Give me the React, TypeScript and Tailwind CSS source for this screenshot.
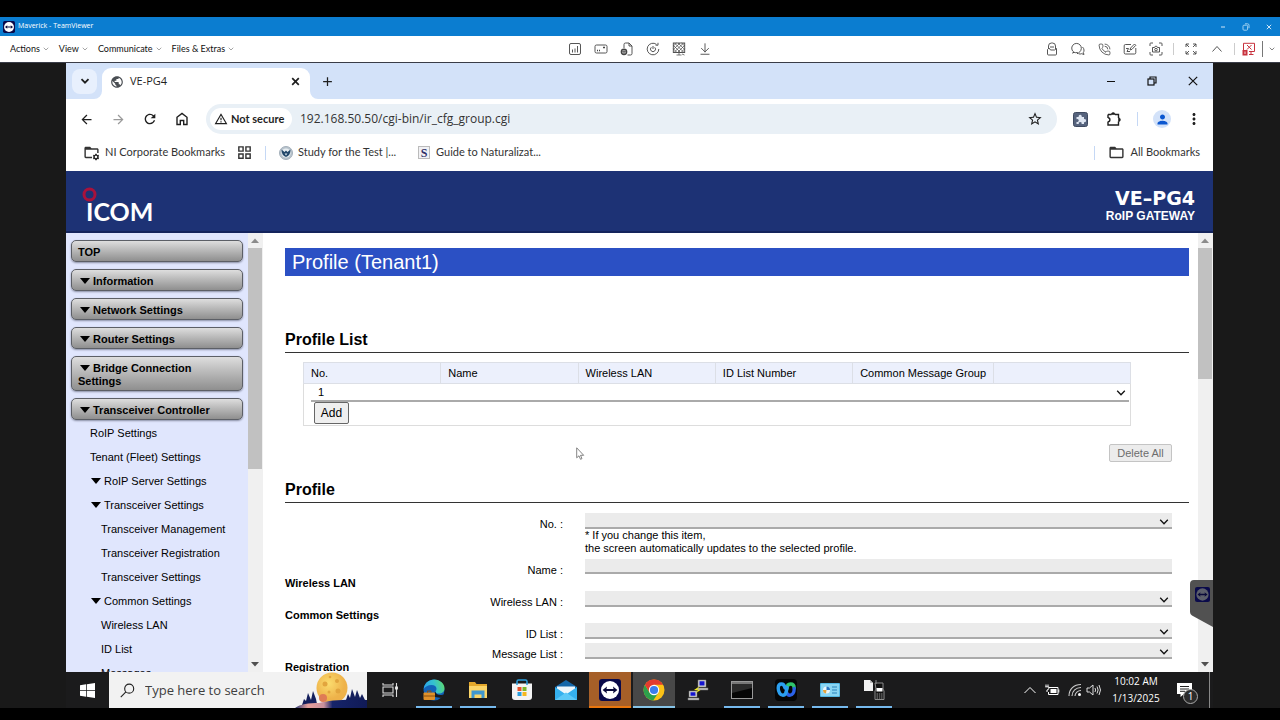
import { useState } from "react";
import type { ReactNode } from "react";
import {
  MdAdd, MdArrowBack, MdArrowForward, MdFolderOpen, MdGridView,
  MdMoreVert, MdOutlineWarningAmber, MdPerson, MdPublic,
  MdRefresh, MdStarBorder, MdSettings,
} from "react-icons/md";
import { ArrowDownToLine, ChevronDown, PhoneCall } from "lucide-react";

interface NavItem {
  label: string;
  level: 1 | 2 | 3;
  group?: boolean;
}

const MENUS = ["Actions", "View", "Communicate", "Files & Extras"];

const SECTIONS = [
  "Information",
  "Network Settings",
  "Router Settings",
  "Bridge Connection Settings",
  "Transceiver Controller",
];

const NAV: NavItem[] = [
  { label: "RoIP Settings", level: 1 },
  { label: "Tenant (Fleet) Settings", level: 1 },
  { label: "RoIP Server Settings", level: 2, group: true },
  { label: "Transceiver Settings", level: 2, group: true },
  { label: "Transceiver Management", level: 3 },
  { label: "Transceiver Registration", level: 3 },
  { label: "Transceiver Settings", level: 3 },
  { label: "Common Settings", level: 2, group: true },
  { label: "Wireless LAN", level: 3 },
  { label: "ID List", level: 3 },
  { label: "Messages", level: 3 },
];

const COLUMNS = ["No.", "Name", "Wireless LAN", "ID List Number", "Common Message Group", ""];

/* ---------- TeamViewer ---------- */

function TeamViewerLogo({ className, disc = "#fff" }: { className?: string; disc?: string }) {
  return (
    <svg viewBox="0 0 22 22" className={className} aria-hidden="true">
      <rect width="22" height="22" rx="3" fill="#0a0a4a" />
      <circle cx="11" cy="11" r="9" fill={disc} />
      <path d="M3.6 11 8 7.6l-.5 2.3h7L14 7.6l4.4 3.4-4.4 3.4.5-2.3h-7l.5 2.3z" fill="#0a0a3a" />
    </svg>
  );
}

function TitleBar() {
  return (
    <div className="flex h-[19px] shrink-0 items-center bg-[#0b7dd0] pl-[3px] text-white">
      <TeamViewerLogo className="size-3" />
      <span className="ml-[3px] text-[7px]">Maverick - TeamViewer</span>
      <div className="ml-auto flex">
        <button aria-label="Minimize" className="flex w-[23px] justify-center">
          <svg viewBox="0 0 8 8" className="size-2" stroke="#cfe6f7"><path d="M2 4h4" /></svg>
        </button>
        <button aria-label="Restore" className="flex w-[23px] justify-center">
          <svg viewBox="0 0 8 8" className="size-2" fill="none" stroke="#9fd0f0">
            <rect x="1" y="2.2" width="4.6" height="5" rx="1" /><path d="M3 .8h2.6a1.4 1.4 0 0 1 1.4 1.4v3" />
          </svg>
        </button>
        <button aria-label="Close" className="flex w-[23px] justify-center">
          <svg viewBox="0 0 8 8" className="size-2" stroke="#cfe6f7"><path d="m1.8 1.8 4.4 4.4m0-4.4L1.8 6.2" /></svg>
        </button>
      </div>
    </div>
  );
}

function ToolButton({ label, children }: { label: string; children: ReactNode }) {
  return (
    <button aria-label={label} className="flex w-[26px] items-center justify-center">
      {children}
    </button>
  );
}

function Glyph({ children }: { children: ReactNode }) {
  return (
    <svg viewBox="0 0 14 14" fill="none" stroke="currentColor" strokeWidth="0.9" className="size-3.5">
      {children}
    </svg>
  );
}

function MenuBar() {
  return (
    <div className="grid h-[27px] shrink-0 grid-cols-[1fr_auto_1fr] items-center border-b border-[#3a3d48] bg-white text-[#444]">
      <nav className="flex gap-[9px] pl-[10px]">
        {MENUS.map((m) => (
          <button key={m} className="flex items-center gap-[2px] font-['Lato',sans-serif] text-[9px] text-[#111]">
            {m}
            <ChevronDown size={8} strokeWidth={2} className="text-[#777]" />
          </button>
        ))}
      </nav>

      <div className="flex">
        <ToolButton label="Statistics">
          <Glyph>
            <rect x="1.5" y="1.5" width="11" height="11" rx="1.5" />
            <path d="M4.5 10.5V7.5M7 10.5V6.5M9.5 10.5V4" />
          </Glyph>
        </ToolButton>
        <ToolButton label="Device">
          <Glyph>
            <rect x="1" y="3" width="12" height="8" rx="1.5" />
            <path d="M3 8.5h1M5 8.5h1M9 5.5h2" strokeWidth="1.3" />
          </Glyph>
        </ToolButton>
        <ToolButton label="Remote file">
          <Glyph>
            <path d="M4 6V2.5A1.500 1.500 0 0 1 5.500 1H9l3 3v7.500a1.500 1.500 0 0 1-1.500 1.500H7.500M9 1v3h3" />
            <circle cx="4" cy="9.8" r="2.6" strokeWidth="1.5" />
            <path d="M1.500 9.800h5M4 7.300v5" />
          </Glyph>
        </ToolButton>
        <ToolButton label="Reboot">
          <Glyph>
            <path d="M12.800 7A5.800 5.800 0 1 1 10.500 2.400M12 .8v2.400H9.600" />
            <path d="M5.300 5.300a2.500 2.500 0 1 0 3.400 0M7 4v3" />
          </Glyph>
        </ToolButton>
        <ToolButton label="Black screen">
          <Glyph>
            <rect x="1.3" y="1" width="11.4" height="9.5" />
            <path d="M1.300 4 4.500 1M1.300 7.500 8 1M2 10.500 11.500 1M5.500 10.500l7-7M9 10.500l3.700-3.700M12.700 4 9.500 1M12.700 7.500 6 1M12 10.500 2.500 1M8.500 10.500l-7-7M5 10.500 1.300 6.800M4.500 13h5M7 10.500V13M10 12l2.500 1" strokeWidth="0.7" />
          </Glyph>
        </ToolButton>
        <ToolButton label="Download">
          <ArrowDownToLine size={14} strokeWidth={1.5} />
        </ToolButton>
      </div>

      <div className="flex items-center justify-end">
        <ToolButton label="Remote session">
          <Glyph>
            <path d="M3.500 6V4a3 3 0 0 1 3-3h1a3 3 0 0 1 3 3v3" />
            <path d="M2.500 7.500 4 6l1.500 2h4L11.500 6.500V12a1 1 0 0 1-1 1h-7a1 1 0 0 1-1-1zM5 5h4" />
          </Glyph>
        </ToolButton>
        <ToolButton label="Chat">
          <Glyph>
            <path d="M3 10.300A4.800 4.800 0 1 1 8.500 10L6.500 12v-1.500Q4.500 11 3 10.300L1.500 11z" />
            <path d="M11.500 5c2 2 1.800 4.300.8 5.500l.7 2-2.300-.8q-1.500.6-3 .1" />
          </Glyph>
        </ToolButton>
        <ToolButton label="Call"><PhoneCall size={13} strokeWidth={1.5} /></ToolButton>
        <ToolButton label="Whiteboard">
          <Glyph>
            <path d="M8 2.500H2.500a1.300 1.300 0 0 0-1.300 1.300v6.900A1.300 1.300 0 0 0 2.500 12h9a1.300 1.300 0 0 0 1.300-1.300V6" />
            <path d="m7 8 .6-2L11.500 2l1.300 1.300L9 7.300zM3 6.500h2.500L4 9.500h3" />
          </Glyph>
        </ToolButton>
        <ToolButton label="Screenshot">
          <Glyph>
            <path d="M1 4V1.800A.8.8 0 0 1 1.800 1H4M10 1h2.200a.8.8 0 0 1 .8.800V4M13 10v2.200a.8.8 0 0 1-.8.800H10M4 13H1.800a.8.8 0 0 1-.8-.8V10" />
            <path d="M3.500 5.500h2L6.200 4.300h1.600l.7 1.200h2v4.500h-7z" />
            <circle cx="7" cy="7.6" r="1.3" />
          </Glyph>
        </ToolButton>
        <span className="mr-1 ml-1 h-3 w-px bg-[#ccc]" />
        <ToolButton label="Full screen">
          <Glyph>
            <path d="M2 5V2h3M9 2h3v3M12 9v3H9M5 12H2V9M2 2l3 3M12 2 9 5M12 12 9 9M2 12l3-3" />
          </Glyph>
        </ToolButton>
        <ToolButton label="Collapse">
          <Glyph><path d="m2.500 9.500 4.500-5 4.500 5" /></Glyph>
        </ToolButton>
        <span className="mr-px ml-1 h-3 w-px bg-[#ccc]" />
        <ToolButton label="End session">
          <svg viewBox="0 0 14 14" fill="none" stroke="#c8323e" className="size-3.5">
            <path d="M3 9.500H1.500V1.300h11v8.200H7M5 3l4.500 4.500M9.500 3 5 7.500M9 9.500V12M7 12.500h4.500" />
            <rect x="0.5" y="8" width="5" height="5.5" fill="#c8323e" stroke="none" />
            <path d="M3 9.500v2.500" stroke="#fff" strokeWidth="0.8" />
          </svg>
        </ToolButton>
        <span className="h-4 w-px bg-[#777]" />
        <button aria-label="More" className="flex w-[17px] justify-center">
          <ChevronDown size={8} strokeWidth={2} />
        </button>
      </div>
    </div>
  );
}

/* ---------- Browser chrome ---------- */

function TabStrip() {
  return (
    <div className="flex h-9 shrink-0 items-center bg-[#d3e2f9] pl-[6px] text-[#1f1f1f]">
      <button aria-label="Search tabs" className="flex size-[25px] items-center justify-center rounded-lg bg-[#e8f0fd]">
        <svg viewBox="0 0 10 10" className="size-2.5" fill="none" stroke="currentColor" strokeWidth="1.8"><path d="m1.500 3.200 3.500 3.500 3.500-3.500" /></svg>
      </button>
      <div className="relative ml-[5px] flex h-[31px] w-[208px] items-center self-end rounded-t-[9px] bg-white pr-[10px] pb-1 pl-2">
        <svg viewBox="0 0 8 8" className="absolute bottom-0 -left-2 size-2" fill="#fff"><path d="M8 0v8H0a8 8 0 0 0 8-8" /></svg>
        <svg viewBox="0 0 8 8" className="absolute -right-2 bottom-0 size-2" fill="#fff"><path d="M0 0v8h8a8 8 0 0 1-8-8" /></svg>
        <MdPublic size={14} className="text-[#4a4e53]" />
        <span className="ml-[6px] text-[11px]">VE-PG4</span>
        <button aria-label="Close tab" className="ml-auto">
          <svg viewBox="0 0 9 9" className="size-[9px]" stroke="currentColor" strokeWidth="1.7"><path d="m1.200 1.200 6.600 6.600M7.800 1.200 1.200 7.800" /></svg>
        </button>
      </div>
      <button aria-label="New tab" className="ml-[10px]"><MdAdd size={15} /></button>
      <div className="ml-auto flex">
        <button aria-label="Minimize" className="flex w-[41px] justify-center">
          <svg viewBox="0 0 10 10" className="size-2.5" stroke="#111"><path d="M1 5.500h8" /></svg>
        </button>
        <button aria-label="Restore" className="flex w-[41px] justify-center">
          <svg viewBox="0 0 10 10" className="size-2.5" fill="none" stroke="#111" strokeWidth="1.2">
            <rect x="1" y="3" width="6" height="6" /><path d="M3 3V1h6v6H7" />
          </svg>
        </button>
        <button aria-label="Close" className="flex w-[41px] justify-center">
          <svg viewBox="0 0 10 10" className="size-2.5" stroke="#111" strokeWidth="1.2"><path d="m.8.8 8.400 8.400M9.200.8.8 9.200" /></svg>
        </button>
      </div>
    </div>
  );
}

function AddressBar() {
  return (
    <div className="flex h-10 shrink-0 items-center bg-white pl-1 text-[#1f1f1f]">
      <button aria-label="Back" className="flex w-8 justify-center"><MdArrowBack size={15} /></button>
      <button aria-label="Forward" className="flex w-8 justify-center text-[#9a9a9a]"><MdArrowForward size={15} /></button>
      <button aria-label="Reload" className="flex w-8 justify-center"><MdRefresh size={16} /></button>
      <button aria-label="Home" className="flex w-8 justify-center">
        <svg viewBox="0 0 14 14" className="size-3.5" fill="none" stroke="currentColor" strokeWidth="1.4">
          <path d="M2 5.300 7 1.500l5 3.800v7.200H8.700V8.500H5.300v4H2z" />
        </svg>
      </button>

      <div className="ml-2 flex h-[30px] flex-1 items-center rounded-full bg-[#e9f0f6] pl-1">
        <button className="flex h-[22px] w-[82px] items-center gap-[3px] rounded-full bg-white pl-1 font-['Lato',sans-serif] text-[11px] font-bold whitespace-nowrap">
          <MdOutlineWarningAmber size={14} className="shrink-0" />
          Not secure
        </button>
        <input
          aria-label="Address"
          defaultValue="192.168.50.50/cgi-bin/ir_cfg_group.cgi"
          className="ml-2 min-w-0 flex-1 bg-transparent text-[12px] text-[#333] outline-none"
        />
        <button aria-label="Bookmark" className="mr-3.5"><MdStarBorder size={16} /></button>
      </div>

      <button aria-label="Extension" className="ml-4">
        <svg viewBox="0 0 15 15" className="size-[15px]">
          <rect x="0.5" y="0.5" width="14" height="14" rx="2" fill="#56637d" stroke="#3f4a61" />
          <path d="M3.500 5h2.200a1.600 1.600 0 1 1 3 0H11v2.200a1.500 1.500 0 1 1 0 2.800v2H8.500a1.400 1.400 0 1 0-2.600 0H3.500V9.800a1.500 1.500 0 1 0 0-2.600z" fill="#dfe6f2" />
        </svg>
      </button>
      <button aria-label="Extensions" className="ml-[18px]">
        <svg viewBox="0 0 16 16" className="size-4" fill="none" stroke="currentColor" strokeWidth="1.4">
          <path d="M2 3.500h3.500M9 3.500h3.500V7M12.500 10.500V14H2v-3.500M2 7V3.500M2 6.800a1.900 1.900 0 0 1 0 3.800" />
          <path d="M5.300 3.500a1.900 1.900 0 0 1 3.800 0zM12.500 6.800a1.900 1.900 0 0 1 0 3.800z" fill="currentColor" strokeWidth=".6" />
        </svg>
      </button>
      <span className="ml-[15px] h-3.5 w-px bg-[#c5d8f5]" />
      <button aria-label="Profile" className="ml-[15px] flex size-[18px] items-center justify-center rounded-full bg-[#d3e2f9] text-[#0b57d0]">
        <MdPerson size={15} />
      </button>
      <button aria-label="Menu" className="mr-[10px] ml-[14px]"><MdMoreVert size={18} /></button>
    </div>
  );
}

function BookmarkBar() {
  return (
    <div className="flex h-8 shrink-0 items-center bg-white pr-[13px] pb-[5px] pl-[17px] font-['Lato',sans-serif] text-[11px] text-[#333]">
      <a href="#corporate" className="flex items-center gap-[5px]">
        <span className="relative">
          <MdFolderOpen size={17} className="text-[#333]" />
          <MdSettings size={8} className="absolute right-0 bottom-0 bg-white text-[#222]" />
        </span>
        NI Corporate Bookmarks
      </a>
      <button aria-label="Apps" className="ml-[11px] text-[#333]"><MdGridView size={17} /></button>
      <span className="ml-3 h-3.5 w-px bg-[#c5d8f5]" />
      <a href="#study" className="ml-[13px] flex items-center gap-[5px]">
        <svg viewBox="0 0 14 14" className="size-3.5">
          <circle cx="7" cy="7" r="6.5" fill="#b9c4cd" stroke="#a3afba" />
          <circle cx="7" cy="7" r="4.6" fill="#e8eef2" />
          <path d="M2.500 3.500 5.500 6 7 4.500 8.500 6l3-2.500c0 4-1.500 6.500-4.500 7.500-3-1-4.500-3.500-4.500-7.500" fill="#22486b" />
          <path d="M5.600 7.500h2.800L7 9.500z" fill="#d6e4ee" />
        </svg>
        Study for the Test |...
      </a>
      <a href="#guide" className="ml-[22px] flex items-center gap-[6px]">
        <span className="flex h-[13px] w-3 items-center justify-center border border-[#bbb] bg-[#f1f1f4] font-['Liberation_Serif',serif] text-[12px] leading-none font-bold text-[#2c2f68]">
          S
        </span>
        Guide to Naturalizat...
      </a>
      <span className="ml-auto h-3.5 w-px bg-[#c5d8f5]" />
      <a href="#all" className="ml-[13px] flex items-center gap-[6px]">
        <MdFolderOpen size={17} className="text-[#333]" />
        All Bookmarks
      </a>
    </div>
  );
}

/* ---------- VE-PG4 web page ---------- */

function BrandHeader() {
  return (
    <header className="flex h-[62px] shrink-0 items-start justify-between border-b-2 border-[#14245c] bg-[#1d3275] pr-[18px] pl-4 text-white">
      <div className="pt-4">
        <svg viewBox="0 0 15 15" className="size-[15px]" fill="none" stroke="#a8123c" strokeWidth="3">
          <circle cx="7.5" cy="7.5" r="5.5" />
        </svg>
        <p className="pl-1 font-['Lato',sans-serif] text-[25px] leading-[18px] font-bold">ICOM</p>
      </div>
      <div className="pt-[18px] text-right">
        <p className="font-['DejaVu_Sans',sans-serif] text-[19px] leading-[18px] font-bold">VE–PG4</p>
        <p className="font-['Liberation_Sans',sans-serif] text-[12px] leading-[18px] font-bold">RoIP GATEWAY</p>
      </div>
    </header>
  );
}

function Scrollbar({ thumb }: { thumb: "long" | "short" }) {
  return (
    <div className="flex w-[15px] shrink-0 flex-col items-center bg-[#f0f0f0] pr-px">
      <svg viewBox="0 0 8 15" className="h-[15px] w-2 shrink-0" fill="#8b8b8b"><path d="M0 10h8L4 5.500z" /></svg>
      <div className={thumb === "long" ? "h-[221px] w-full bg-[#c1c1c1]" : "h-[131px] w-full bg-[#c1c1c1]"} />
      <svg viewBox="0 0 8 15" className="mt-auto h-[15px] w-2 shrink-0" fill="#505050"><path d="M0 5h8L4 9.500z" /></svg>
    </div>
  );
}

function Caret() {
  return (
    <svg viewBox="0 0 10 6" className="mr-[3px] inline-block h-[6px] w-[10px] align-[1px]" aria-hidden="true">
      <path d="M0 0h10L5 6z" />
    </svg>
  );
}

function Sidebar() {
  return (
    <aside className="w-[182px] shrink-0 overflow-hidden bg-[#e0e6fd] pt-[7px] pr-[5px] pl-[5px]">
      <div className="flex flex-col gap-[7px]">
        {["TOP", ...SECTIONS].map((s) => (
          <button
            key={s}
            className="rounded-[5px] border border-[#5c5f66] bg-linear-to-b from-[#dedede] to-[#8f8f8f] pt-[5px] pr-8 pb-[2px] pl-[6px] text-left text-[11px] leading-[13px] font-bold text-black shadow-[0_1px_2px_#8a8fa5] first:pr-1 last:pr-1"
          >
            {s !== "TOP" && <span className="pl-[2px]"><Caret /></span>}
            {s}
          </button>
        ))}
      </div>
      <ul className="pt-px text-[11px] leading-6 whitespace-nowrap text-black">
        {NAV.map((n) => (
          <li
            key={n.label + n.level}
            className={n.level === 1 ? "pl-[19px]" : n.level === 2 ? "pl-5" : "pl-[30px]"}
          >
            <a href="#nav">
              {n.group && <Caret />}
              {n.label}
            </a>
          </li>
        ))}
      </ul>
    </aside>
  );
}

function Heading({ children }: { children: ReactNode }) {
  return <h2 className="border-b border-[#333] text-[16px] leading-6 font-bold">{children}</h2>;
}

function SelectArrow() {
  return (
    <svg viewBox="0 0 10 6" className="pointer-events-none absolute top-[6px] right-[3px] h-[6px] w-[10px]" fill="none" stroke="#111" strokeWidth="1.3">
      <path d="m1.200.8 3.800 3.900L8.800.8" />
    </svg>
  );
}

function ProfileList() {
  const [profile, setProfile] = useState("1");

  return (
    <div className="mt-[9px] mr-[58px] ml-[18px]">
      <table className="w-full table-fixed border-collapse border border-[#ddd] text-[11px]">
        <thead>
          <tr className="h-[21px] bg-[#ecf0fc]">
            {COLUMNS.map((c, i) => (
              <th
                key={i}
                className={`${i === 4 ? "w-[17%]" : "w-[16.6%]"} border border-[#dcdfe6] p-0 pl-[7px] text-left font-normal whitespace-nowrap`}
              >
                {c}
              </th>
            ))}
          </tr>
        </thead>
        <tbody>
          <tr>
            <td colSpan={6} className="p-0 pb-px pl-[7px]">
              <div className="relative mr-px h-[18px]">
                <select
                  aria-label="Profile number"
                  value={profile}
                  onChange={(e) => setProfile(e.target.value)}
                  className="h-[18px] w-full appearance-none border-b-2 border-[#aaa] bg-white pl-[7px]"
                >
                  <option>1</option>
                </select>
                <SelectArrow />
              </div>
              <button className="ml-[3px] block h-[22px] w-[35px] rounded-[2px] border border-[#666] bg-[#efefef] text-[12px]">
                Add
              </button>
            </td>
          </tr>
        </tbody>
      </table>
    </div>
  );
}

function Field({ id, label, text, hint }: { id: string; label: string; text?: boolean; hint?: ReactNode }) {
  return (
    <div className="grid grid-cols-[278px_1fr] gap-x-[22px] pr-[17px]">
      <label htmlFor={id} className="pt-[6px] text-right leading-[10px]">{label} :</label>
      <div>
        {text ? (
          <input id={id} disabled className="block h-[15px] w-full border-b-2 border-[#aaa] bg-[#ebebeb]" />
        ) : (
          <div className="relative h-4">
            <select id={id} disabled className="block h-4 w-full appearance-none border-b-2 border-[#aaa] bg-[#ebebeb]" />
            <SelectArrow />
          </div>
        )}
        {hint && <p className="leading-[13px]">{hint}</p>}
      </div>
    </div>
  );
}

function SubHeading({ children }: { children: ReactNode }) {
  return <h3 className="leading-4 font-bold">{children}</h3>;
}

function ProfilePage() {
  return (
    <main className="min-w-0 flex-1 overflow-hidden bg-white pt-[15px] pr-[9px] pl-[22px] text-black">
      <h1 className="mb-[52px] bg-[#2b50c4] pl-[7px] text-[20px] leading-7 text-white">Profile (Tenant1)</h1>
      <Heading>Profile List</Heading>
      <ProfileList />
      <div className="mt-[18px] mb-4 flex justify-end pr-[17px]">
        <button disabled className="h-[18px] w-[63px] rounded-[2px] border border-[#c4c4c4] bg-[#ececec] text-[11px] leading-4 text-[#6d6d6d]">
          Delete All
        </button>
      </div>
      <Heading>Profile</Heading>
      <form className="pt-[10px] text-[11px]">
        <Field
          id="no"
          label="No."
          hint={<>* If you change this item,<br />the screen automatically updates to the selected profile.</>}
        />
        <div className="h-1" />
        <Field id="name" label="Name" text />
        <SubHeading>Wireless LAN</SubHeading>
        <Field id="wlan" label="Wireless LAN" />
        <SubHeading>Common Settings</SubHeading>
        <Field id="idlist" label="ID List" />
        <div className="h-1" />
        <Field id="msglist" label="Message List" />
        <SubHeading>Registration</SubHeading>
      </form>
    </main>
  );
}

function SideHandle() {
  return (
    <div className="absolute top-[347px] right-0">
      <svg viewBox="0 0 23 47" className="h-[47px] w-[23px]">
        <path d="M23 0H4a4 4 0 0 0-4 4v28a4 4 0 0 0 2 3.500L23 47z" fill="#515151" />
      </svg>
      <TeamViewerLogo disc="#5c5f6b" className="absolute top-[7px] left-[5px] size-[15px]" />
    </div>
  );
}

/* ---------- Windows taskbar ---------- */

function TaskItem({ label, state = "none", children }: {
  label: string;
  state?: "none" | "running" | "attention" | "active";
  children: ReactNode;
}) {
  const styles = {
    none: "border-transparent",
    running: "border-[#76b9ed]",
    attention: "border-[#e8760e] bg-[#a65f28]",
    active: "border-[#86c4e8] bg-[#484848]",
  };
  const width = state === "attention" || state === "active" ? "w-[42px]" : "w-9";
  return (
    <div className="flex w-11 justify-center">
      <button aria-label={label} className={`flex h-9 items-center justify-center border-b-2 pt-[2px] ${width} ${styles[state]}`}>
        {children}
      </button>
    </div>
  );
}

function SearchArt() {
  return (
    <svg viewBox="0 0 72 36" className="h-9 w-[72px]">
      <defs>
        <linearGradient id="hill" x1="0" x2="1">
          <stop offset="0" stopColor="#2a3b78" />
          <stop offset=".18" stopColor="#e8a09c" />
          <stop offset=".4" stopColor="#c8909c" />
          <stop offset=".52" stopColor="#16246a" />
          <stop offset="1" stopColor="#101a56" />
        </linearGradient>
        <radialGradient id="moon" cx=".4" cy=".35">
          <stop offset="0" stopColor="#fbdc6e" />
          <stop offset="1" stopColor="#eeb24a" />
        </radialGradient>
      </defs>
      <circle cx="37" cy="16" r="15.5" fill="url(#moon)" />
      <g fill="#e2a53e">
        <circle cx="30" cy="12" r="2.5" /><circle cx="42" cy="9" r="2" /><circle cx="43" cy="19" r="2.5" />
        <circle cx="34" cy="20" r="1.5" /><circle cx="35" cy="5" r="1.3" />
      </g>
      <circle cx="28" cy="26" r="4" fill="#df7b55" />
      <path d="M7 33 9 27l2 2 2-8 3 7 2-9 3 8 1 5zM50 31l3-9 2 4 2-9 3 8 2-7 3 8 2-4 3 6v3z" fill="#141f5c" />
      <path d="M0 36c5-4 14-5 24-5 10-3 28-4 48-3v8z" fill="url(#hill)" />
    </svg>
  );
}

function PuttyIcon() {
  return (
    <svg viewBox="0 0 22 22" className="size-[22px]">
      <g stroke="#777" strokeWidth=".5">
        <path d="M11 1h8v7h-8zM2 12h8v6H2z" fill="#d4d4d4" />
        <path d="M10 9h11v2H10zM1 19h11v2H1z" fill="#c4c4c4" />
      </g>
      <path d="M12.500 2.300h5v4.200h-5zM3.500 13.200h5v3.600h-5z" fill="#1414d0" />
      <path d="m13 7-6 4 4 .5L7.500 15l6-4-3.500-.5z" fill="#f5ee1c" />
    </svg>
  );
}

function Taskbar() {
  return (
    <footer className="flex h-9 shrink-0 items-center bg-[#1b1b1c] text-white">
      <button aria-label="Start" className="flex w-[43px] justify-center">
        <svg viewBox="0 0 16 16" className="size-[15px]" fill="#fff">
          <path d="M0 2.300 6.500 1.400v6.200H0zM7.300 1.300 16 0v7.600H7.300zM0 8.400h6.500v6.200L0 13.700zM7.300 8.400H16V16l-8.700-1.300z" />
        </svg>
      </button>
      <div className="mr-px flex h-full w-[258px] items-center bg-[#f2f2f2] pl-[11px]">
        <svg viewBox="0 0 16 16" className="size-[15px]" fill="none" stroke="#222" strokeWidth="1.2">
          <circle cx="9.8" cy="6" r="4.8" /><path d="M6.300 9.500.8 15" />
        </svg>
        <input
          aria-label="Search"
          placeholder="Type here to search"
          className="ml-[10px] w-[150px] bg-transparent pt-[2px] text-[13px] text-[#333] outline-none placeholder:text-[#404040]"
        />
        <SearchArt />
      </div>

      <TaskItem label="Task View">
        <svg viewBox="0 0 16 16" className="size-4" fill="none" stroke="#ddd" strokeWidth="1.1">
          <path d="M1 1v2h10V1M1 15v-2h10v2M1 5h10v6H1zM14.500 1v14" /><path d="M13.500 5h2v2h-2z" fill="#fff" />
        </svg>
      </TaskItem>
      <TaskItem label="Edge" state="running">
        <svg viewBox="0 0 22 22" className="size-[22px]">
          <defs>
            <linearGradient id="edgeTop" x1="0" x2="1" y1=".4" y2=".2">
              <stop offset="0" stopColor="#2aa5e8" /><stop offset=".5" stopColor="#35c1cf" /><stop offset="1" stopColor="#5fdc6b" />
            </linearGradient>
          </defs>
          <circle cx="11" cy="11" r="10.5" fill="#1262b8" />
          <path d="M.6 10C1.500 4 6 .5 11.200.5c6 0 10.300 4.500 10.300 8.700 0 3.300-2.500 5.300-5.500 5.300-2.500 0-3.600-1-3.600-1.800s1.100-1 1.100-3C13.500 7.500 11.500 6 8.500 6 5 6 2 8 .6 10" fill="url(#edgeTop)" />
          <path d="M12.500 12.500c.2 3 3.500 4.500 8 3l-2 3.500-6.500-1c-1-2-1-4 .5-5.500" fill="#1b1b1c" />
          <rect x="0.5" y="13.5" width="11.5" height="7.5" rx="1" fill="#e0912a" />
          <path d="M4.500 13.500V12h3.500v1.500M.5 17H12" stroke="#8a5010" fill="none" />
        </svg>
      </TaskItem>
      <TaskItem label="File Explorer" state="running">
        <svg viewBox="0 0 20 18" className="h-[18px] w-5">
          <path d="M1 1h6l1.500 2H19v14H1z" fill="#e3a72b" />
          <path d="M1 5h18v12H1z" fill="#fbd568" />
          <path d="M3.500 9.500h13V17h-3v-3.500h-7V17h-3z" fill="#3f97cf" />
        </svg>
      </TaskItem>
      <TaskItem label="Microsoft Store">
        <svg viewBox="0 0 22 22" className="size-[22px]">
          <path d="M1 4.500h20V18a3 3 0 0 1-3 3H4a3 3 0 0 1-3-3z" fill="#f4f4f4" />
          <path d="M6 6V2.500A1.500 1.500 0 0 1 7.500 1h7A1.500 1.500 0 0 1 16 2.500V6" fill="none" stroke="#2ba0df" strokeWidth="1.5" />
          <path d="M6.500 8h4v4h-4z" fill="#e8502a" /><path d="M11.500 8h4v4h-4z" fill="#7ab82a" />
          <path d="M6.500 13h4v4h-4z" fill="#2a9fe0" /><path d="M11.500 13h4v4h-4z" fill="#f5b81e" />
        </svg>
      </TaskItem>
      <TaskItem label="Mail">
        <svg viewBox="0 0 22 20" className="h-5 w-[22px]">
          <path d="M0 7 11 0l11 7v13H0z" fill="#1466a8" />
          <path d="M2 6.500h18V14H2z" fill="#eef6fb" />
          <path d="m0 7 11 7.500L22 7v13H0z" fill="#35b0ee" />
          <path d="M0 20 11 12.500 22 20z" fill="#5cc8f7" />
        </svg>
      </TaskItem>
      <TaskItem label="TeamViewer" state="attention"><TeamViewerLogo className="size-[22px]" /></TaskItem>
      <TaskItem label="Chrome" state="active">
        <svg viewBox="0 0 22 22" className="size-[22px]">
          <circle cx="11" cy="11" r="10.5" fill="#fbc116" />
          <path d="M1.900 5.700 6.700 13.700 11 16 9.800 21.400A10.500 10.500 0 0 1 1.900 5.700" fill="#2da04c" />
          <path d="M1.900 5.700 6.500 13.600 11 5.800h9.100A10.500 10.500 0 0 0 1.900 5.700" fill="#e33b2e" />
          <path d="m10.200 21.500 5.300-8L11 16l-4.500-2.500z" fill="#2da04c" />
          <circle cx="11" cy="11" r="5.2" fill="#fff" /><circle cx="11" cy="11" r="4.1" fill="#3b7ded" />
        </svg>
      </TaskItem>
      <TaskItem label="PuTTY"><PuttyIcon /></TaskItem>
      <TaskItem label="Command Prompt" state="running">
        <svg viewBox="0 0 22 18" className="h-[18px] w-[22px]">
          <rect x="0.5" y="0.5" width="21" height="17" fill="#050505" stroke="#999" />
          <path d="M1 1h20v2H1z" fill="#777" /><path d="M1 3h20v4L1 12z" fill="#2a2a2a" />
        </svg>
      </TaskItem>
      <TaskItem label="Webex" state="running">
        <svg viewBox="0 0 22 22" className="size-[22px]" fill="none" strokeLinecap="round" strokeWidth="3.4">
          <rect width="22" height="22" rx="4" fill="#060606" />
          <path d="M12 9.500C12 6.500 13.300 5 15.500 5s3.700 1.300 3.700 4" stroke="#2fc56c" />
          <path d="M19.200 9.500c0 4-1.800 6.800-4.400 6.800-2 0-3-1.500-3.600-4" stroke="#2b62e8" />
          <path d="M12 8.500c-.4 4.500-1.300 7.800-4 7.800-2.600 0-4.800-3-4.800-7.300C3.200 6.500 4.500 5 6.500 5s3 1.500 3.500 4" stroke="#2b9ff0" />
        </svg>
      </TaskItem>
      <TaskItem label="Control panel" state="running">
        <svg viewBox="0 0 20 14" className="h-3.5 w-5">
          <rect width="20" height="14" rx="1" fill="#53b9e6" /><rect x="1" y="1" width="18" height="12" fill="#8ad6f4" />
          <circle cx="6.5" cy="7" r="3.5" fill="#eaf6fb" /><path d="M6.500 7V3.500A3.500 3.500 0 0 1 10 7z" fill="#2876c4" />
          <path d="M3 7a3.500 3.500 0 0 0 3 3.500L6.500 7z" fill="#e5a43a" />
          <path d="M12 4h5M12 7h5M12 10h5" stroke="#2b84bd" />
        </svg>
      </TaskItem>
      <TaskItem label="Radio programmer" state="running">
        <svg viewBox="0 0 22 22" className="size-[22px]">
          <path d="M1 1h6l3 3v8H1z" fill="#f2f2f2" /><path d="M7 1v3h3" fill="#bbb" />
          <path d="M13 1v4M12 4h8v6l1 2v8.500h-9V12l1-2z" fill="#111" stroke="#8b8b8b" />
          <path d="M13.500 9h6v3.500h-6z" fill="#fff" />
          <path d="M13.500 15h6M13.500 17h6M13.500 19h6" stroke="#999" strokeDasharray="1.500 .8" />
        </svg>
      </TaskItem>

      <div className="ml-auto flex h-full items-center">
        <svg viewBox="0 0 14 14" className="size-3.5" fill="none" stroke="#fff"><path d="m1.500 10 5.500-5.500 5.500 5.500" /></svg>
        <svg viewBox="0 0 16 12" className="ml-[7px] h-3 w-4" fill="none" stroke="#fff">
          <path d="M5 3.500h9v7H4.500V8" /><path d="M6.500 5h6v4h-6z" fill="#fff" stroke="none" /><path d="M14.800 5.500v3" />
          <path d="M2 .5v2M4 .5v2M1.200 2.800h3.600v1.500A1.800 1.800 0 0 1 3 6v2" />
        </svg>
        <svg viewBox="0 0 14 14" className="ml-2 size-3.5" fill="none" stroke="#ccc" strokeWidth="1.1">
          <path d="M1 13C1 6 6 1.500 13 1.500M4 13c0-5 4-8.500 9-8.500M7 13c0-3 3-5.500 6-5.500" /><circle cx="11.5" cy="11.5" r="1.5" fill="#fff" stroke="none" />
        </svg>
        <svg viewBox="0 0 16 14" className="ml-1 h-3.5 w-4" fill="none" stroke="#ddd">
          <path d="M1 5h2.500L7 2v10L3.500 9H1zM9 5q1.200 2 0 4M11 3.500q2.200 3.500 0 7M13 2q3 5 0 10" />
        </svg>
        <div className="ml-[6px] w-[56px] text-center text-[10px] leading-[17px] whitespace-nowrap">
          <p>10:02 AM</p>
          <p>1/13/2025</p>
        </div>
        <button aria-label="Notifications" className="relative ml-[13px]">
          <svg viewBox="0 0 15 15" className="size-[15px]"><path d="M0 0h15v11H7l-3.500 3v-3H0z" fill="#fff" /><path d="M3 3.500h9M3 6h9M3 8.300h5" stroke="#222" /></svg>
          <span className="absolute top-[6px] left-[6px] flex size-[15px] items-center justify-center rounded-full border border-[#aaa] bg-[#2b2b2b] text-[10px] leading-none">1</span>
        </button>
        <span className="mr-[3px] ml-[17px] h-full w-px bg-[#888]" />
      </div>
    </footer>
  );
}

export default function App() {
  return (
    <div className="flex h-screen flex-col overflow-hidden bg-black pt-[17px] pb-3 font-['Open_Sans','Noto_Sans',sans-serif]">
      <TitleBar />
      <MenuBar />
      <div className="flex min-h-0 flex-1 flex-col bg-[#191919] pr-[67px] pl-[66px]">
        <TabStrip />
        <AddressBar />
        <BookmarkBar />
        <BrandHeader />
        <div className="relative flex min-h-0 flex-1 font-['Liberation_Sans',Arial,sans-serif]">
          <Sidebar />
          <Scrollbar thumb="long" />
          <ProfilePage />
          <Scrollbar thumb="short" />
          <SideHandle />
          {/* remote mouse pointer */}
          <svg viewBox="0 0 9 13" className="absolute top-[214px] left-[510px] h-[13px] w-[9px]" fill="#fff" stroke="#666" strokeWidth="0.8">
            <path d="M.7.800v10l2.300-2 1.500 3.500 1.500-.7-1.500-3.300h3.200z" />
          </svg>
        </div>
        <Taskbar />
      </div>
    </div>
  );
}
